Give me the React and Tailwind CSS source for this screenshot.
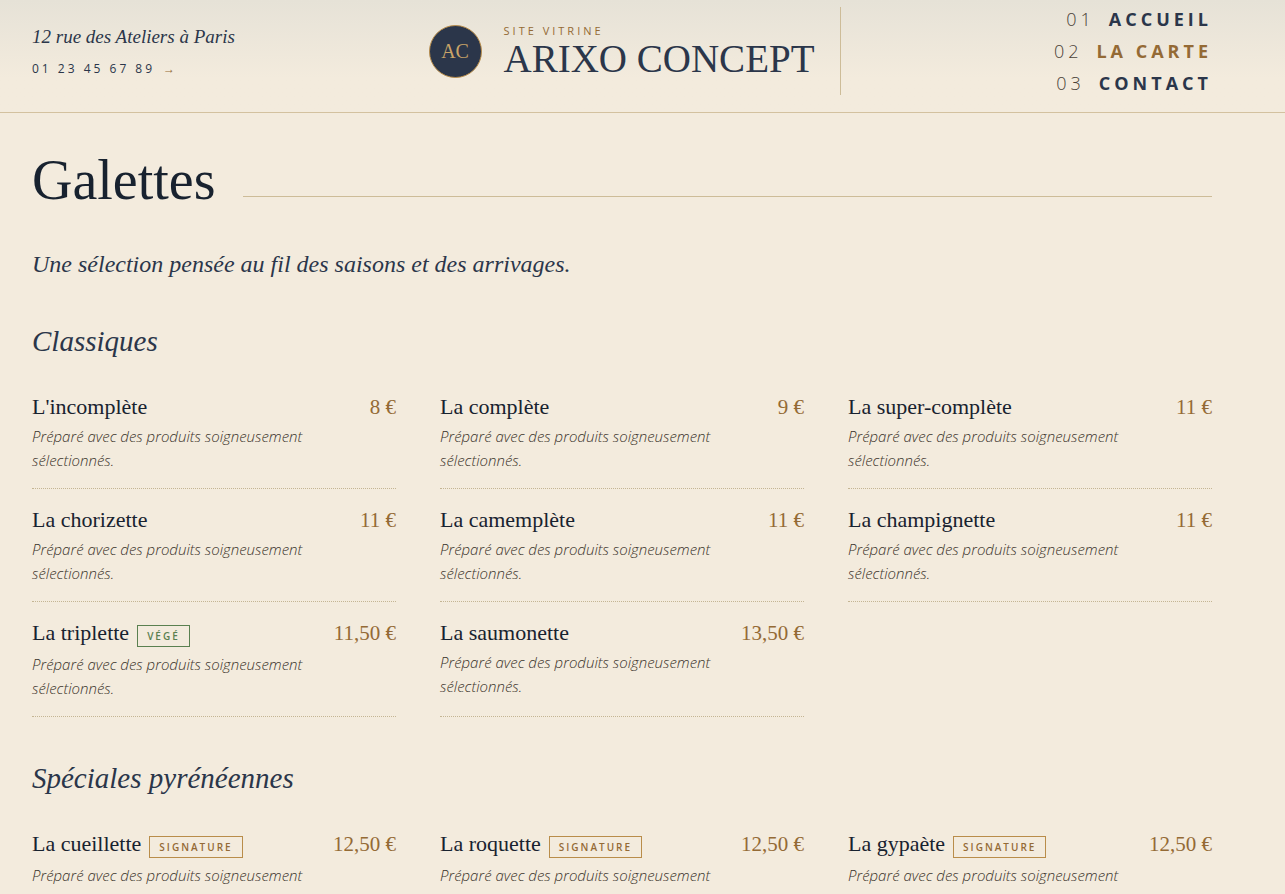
import React from "react";

const NAV_LINKS = [
  { number: "01", label: "Accueil", href: "#accueil" },
  { number: "02", label: "La carte", href: "#carte", active: true },
  { number: "03", label: "Contact", href: "#contact" },
];

const DESCRIPTION = "Préparé avec des produits soigneusement sélectionnés.";

const SECTIONS = [
  {
    title: "Classiques",
    items: [
      { name: "L'incomplète", price: "8 €" },
      { name: "La complète", price: "9 €" },
      { name: "La super-complète", price: "11 €" },
      { name: "La chorizette", price: "11 €" },
      { name: "La camemplète", price: "11 €" },
      { name: "La champignette", price: "11 €" },
      { name: "La triplette", price: "11,50 €", badge: "Végé" },
      { name: "La saumonette", price: "13,50 €" },
    ],
  },
  {
    title: "Spéciales pyrénéennes",
    items: [
      { name: "La cueillette", price: "12,50 €", badge: "Signature" },
      { name: "La roquette", price: "12,50 €", badge: "Signature" },
      { name: "La gypaète", price: "12,50 €", badge: "Signature" },
    ],
  },
];

const SERIF = "font-['Liberation_Serif',serif]";

const BADGE_COLORS = {
  Végé: "border-[#5a8050] text-[#5a8050]",
  Signature: "border-[#b98d4a] text-[#946a35]",
};

const Header = () => (
  <header className="border-b border-[#d3c19f] bg-linear-to-b from-[#e6e2d7] to-[#f3ebdd] to-70%">
    <div className="grid grid-cols-[1fr_auto_1fr] items-center pt-[3px] pr-[73px] pb-[13px] pl-8">
      <address className="pt-1 not-italic">
        <p className={`${SERIF} text-[19px] leading-6 italic text-[#2b364a]`}>
          12 rue des Ateliers à Paris
        </p>
        <a
          href="tel:0123456789"
          className="mt-2 flex items-center gap-2 text-[12px] leading-6 tracking-[3px] text-[#2b364a]"
        >
          01 23 45 67 89 <span className="text-[#946a35]">→</span>
        </a>
      </address>

      <a
        href="#accueil"
        className="flex h-[88px] items-center gap-[22px] border-r border-[#cdbc98] px-[26px]"
      >
        <span
          className={`${SERIF} flex size-[53px] items-center justify-center rounded-full border border-[#b98d4a] bg-[#2b364a] text-[20px] text-[#c9a468]`}
        >
          AC
        </span>
        <span className="flex flex-col">
          <span className="text-[11px] leading-4 tracking-[3px] text-[#946a35] uppercase">
            Site vitrine
          </span>
          <span className={`${SERIF} text-[39px] leading-10 text-[#2b364a] uppercase`}>
            Arixo Concept
          </span>
        </span>
      </a>

      <nav>
        <ul className="flex flex-col items-end">
          {NAV_LINKS.map((link) => (
            <li key={link.label}>
              <a
                href={link.href}
                className={`flex items-baseline gap-3.5 text-[18px] leading-8 tracking-[4px] uppercase ${
                  link.active ? "text-[#946a35]" : "text-[#2b364a]"
                }`}
              >
                <span className="font-light text-[#4a4238]">{link.number}</span>
                <span className="font-bold">{link.label}</span>
              </a>
            </li>
          ))}
        </ul>
      </nav>
    </div>
  </header>
);

const MenuItem = ({ item }) => (
  <li className="border-b border-dotted border-[#c4b593] pt-4 pb-4">
    <div className="flex items-baseline justify-between gap-4">
      <h3 className={`${SERIF} flex items-baseline gap-2 text-[22px] leading-[30px] text-[#18222f]`}>
        {item.name}
        {item.badge && (
          <span
            className={`mb-[3px] border px-[9px] font-['Open_Sans',sans-serif] text-[10px] leading-5 font-semibold tracking-[2px] uppercase ${BADGE_COLORS[item.badge]}`}
          >
            {item.badge}
          </span>
        )}
      </h3>
      <span className={`${SERIF} text-[21px] leading-[30px] whitespace-nowrap text-[#946a35]`}>
        {item.price}
      </span>
    </div>
    <p className="mt-0.5 max-w-[90%] text-[15px] leading-6 font-light italic text-[#3b332b]">
      {DESCRIPTION}
    </p>
  </li>
);

const MenuSection = ({ section }) => (
  <section className="mt-[41px]">
    <h2 className={`${SERIF} text-[29px] leading-10 italic text-[#2b364a]`}>{section.title}</h2>
    <ul className="mt-[15px] grid grid-cols-3 gap-x-11">
      {section.items.map((item) => (
        <MenuItem key={item.name} item={item} />
      ))}
    </ul>
  </section>
);

const App = () => {
  return (
    <div className="min-h-screen bg-[#f3ebdd] font-['Open_Sans',sans-serif]">
      <Header />
      <main className="pt-[35px] pr-[73px] pb-16 pl-8">
        <div className="flex items-center gap-7">
          <h1 className={`${SERIF} text-[56px] leading-[64px] text-[#18222f]`}>Galettes</h1>
          <div className="mt-8 h-px flex-1 bg-[#cdbc98]" />
        </div>
        <p className={`${SERIF} mt-9 text-[24px] leading-8 italic text-[#2b364a]`}>
          Une sélection pensée au fil des saisons et des arrivages.
        </p>
        {SECTIONS.map((section) => (
          <MenuSection key={section.title} section={section} />
        ))}
      </main>
    </div>
  );
};

export default App;
